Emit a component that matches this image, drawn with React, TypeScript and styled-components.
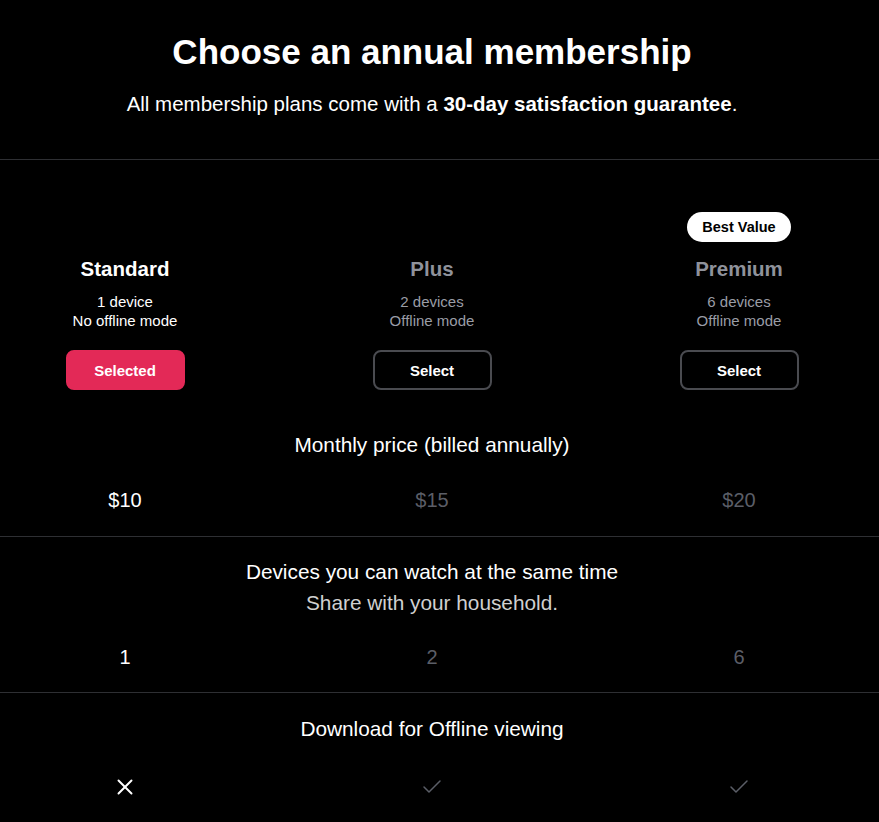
import styled, { createGlobalStyle } from 'styled-components';
import { Check, X } from 'lucide-react';

const GlobalStyle = createGlobalStyle`
  html, body {
    margin: 0;
    padding: 0;
    background: #000;
  }
  body {
    font-family: "Liberation Sans", Arial, sans-serif;
    color: #fff;
    -webkit-font-smoothing: antialiased;
  }
`;

const Page = styled.main`
  min-height: 100vh;
  background: #000;
  overflow: hidden;
`;

const Content = styled.div`
  width: 864px;
`;

const Header = styled.header`
  padding: 32px 0 43px;
  text-align: center;
`;

const Title = styled.h1`
  margin: 0;
  font-size: 35px;
  line-height: 40px;
  font-weight: 700;
`;

const Subtitle = styled.p`
  margin: 20px 0 0;
  font-size: 20.5px;
  line-height: 24px;
  font-weight: 400;

  strong {
    font-weight: 700;
  }
`;

const Divider = styled.hr`
  margin: 0;
  border: 0;
  height: 1px;
  width: 879px;
  background: #2e2f33;
`;

const Columns = styled.div`
  display: grid;
  grid-template-columns: repeat(3, 250px);
  justify-content: space-between;
`;

const Plans = styled(Columns)`
  padding-top: 52px;
`;

const Plan = styled.div`
  display: flex;
  flex-direction: column;
  align-items: center;
  text-align: center;
`;

const BadgeSlot = styled.div`
  height: 30px;
  display: flex;
  align-items: center;
  justify-content: center;
`;

const Badge = styled.span`
  display: inline-flex;
  align-items: center;
  height: 30px;
  padding: 0 15px;
  border-radius: 15px;
  background: #fff;
  color: #000;
  font-size: 14.5px;
  font-weight: 700;
`;

const PlanName = styled.h2<{ $active: boolean }>`
  margin: 15px 0 0;
  font-size: 20.5px;
  line-height: 24px;
  font-weight: 700;
  color: ${({ $active }) => ($active ? '#fff' : '#8f929b')};
`;

const PlanInfo = styled.p<{ $active: boolean }>`
  margin: 11px 0 0;
  font-size: 15px;
  line-height: 19px;
  color: ${({ $active }) => ($active ? '#fff' : '#9a9da6')};
`;

const PlanButton = styled.button<{ $active: boolean }>`
  margin-top: 20px;
  box-sizing: border-box;
  width: 119px;
  height: 40px;
  border-radius: 8px;
  font-family: inherit;
  font-size: 15px;
  font-weight: 700;
  color: #fff;
  cursor: pointer;
  background: ${({ $active }) => ($active ? '#e32957' : '#000')};
  border: 2px solid ${({ $active }) => ($active ? '#e32957' : '#4a4b50')};
`;

const Feature = styled.section<{ $top: number; $bottom: number }>`
  padding: ${({ $top, $bottom }) => `${$top}px 0 ${$bottom}px`};
  text-align: center;
`;

const FeatureTitle = styled.h3`
  margin: 0;
  font-size: 20.8px;
  line-height: 24px;
  font-weight: 400;
  color: #fff;
`;

const FeatureNote = styled.p`
  margin: 7px 0 0;
  font-size: 20.8px;
  line-height: 24px;
  color: #d0d0d0;
`;

const Values = styled(Columns)<{ $gap: number }>`
  margin-top: ${({ $gap }) => $gap}px;
`;

const Value = styled.div<{ $active: boolean }>`
  display: flex;
  align-items: center;
  justify-content: center;
  height: 24px;
  font-size: 20px;
  color: ${({ $active }) => ($active ? '#fff' : '#5b5e67')};
`;

const plans = [
  { name: 'Standard', devices: '1 device', offline: 'No offline mode', price: '$10', count: '1', download: false, badge: '' },
  { name: 'Plus', devices: '2 devices', offline: 'Offline mode', price: '$15', count: '2', download: true, badge: '' },
  { name: 'Premium', devices: '6 devices', offline: 'Offline mode', price: '$20', count: '6', download: true, badge: 'Best Value' },
];

const selected = 'Standard';

export default function App() {
  return (
    <Page>
      <GlobalStyle />
      <Content>
        <Header>
          <Title>Choose an annual membership</Title>
          <Subtitle>
            All membership plans come with a <strong>30-day satisfaction guarantee</strong>.
          </Subtitle>
        </Header>
      </Content>
      <Divider />
      <Content>
        <Plans>
          {plans.map((plan) => {
            const active = plan.name === selected;
            return (
              <Plan key={plan.name}>
                <BadgeSlot>{plan.badge && <Badge>{plan.badge}</Badge>}</BadgeSlot>
                <PlanName $active={active}>{plan.name}</PlanName>
                <PlanInfo $active={active}>
                  {plan.devices}
                  <br />
                  {plan.offline}
                </PlanInfo>
                <PlanButton $active={active}>{active ? 'Selected' : 'Select'}</PlanButton>
              </Plan>
            );
          })}
        </Plans>

        <Feature $top={43} $bottom={24}>
          <FeatureTitle>Monthly price (billed annually)</FeatureTitle>
          <Values $gap={31}>
            {plans.map((plan) => (
              <Value key={plan.name} $active={plan.name === selected}>{plan.price}</Value>
            ))}
          </Values>
        </Feature>
      </Content>
      <Divider />
      <Content>
        <Feature $top={23} $bottom={23}>
          <FeatureTitle>Devices you can watch at the same time</FeatureTitle>
          <FeatureNote>Share with your household.</FeatureNote>
          <Values $gap={30}>
            {plans.map((plan) => (
              <Value key={plan.name} $active={plan.name === selected}>{plan.count}</Value>
            ))}
          </Values>
        </Feature>
      </Content>
      <Divider />
      <Content>
        <Feature $top={24} $bottom={24}>
          <FeatureTitle>Download for Offline viewing</FeatureTitle>
          <Values $gap={34}>
            {plans.map((plan) => {
              const active = plan.name === selected;
              return (
                <Value key={plan.name} $active={active}>
                  {plan.download ? (
                    <Check size={24} strokeWidth={1.5} />
                  ) : (
                    <X size={26} strokeWidth={1.8} />
                  )}
                </Value>
              );
            })}
          </Values>
        </Feature>
      </Content>
    </Page>
  );
}
